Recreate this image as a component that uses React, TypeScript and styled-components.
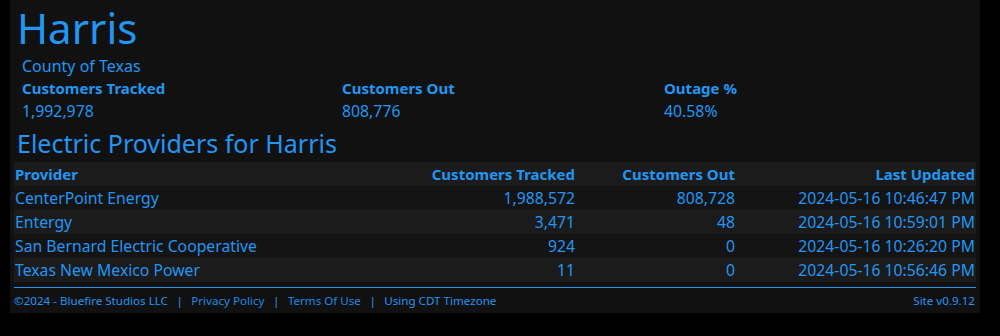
import React from "react";
import styled, { createGlobalStyle } from "styled-components";

const GlobalStyle = createGlobalStyle`
  html, body { margin: 0; padding: 0; background: #000; }
  body { font-family: "Noto Sans", "Open Sans", sans-serif; color: #2196f3; }
`;

const Page = styled.div`
  width: 970px;
  margin-left: 10px;
  background: #111111;
  padding: 0 4px 3px 4px;
  box-sizing: border-box;
`;

const Title = styled.h1`
  margin: 0;
  padding-left: 3px;
  font-size: 42px;
  line-height: 55px;
  font-weight: 400;
  color: #2196f3;
`;

const Subtitle = styled.div`
  padding-left: 8px;
  font-size: 16px;
  line-height: 22px;
  color: #2196f3;
`;

const Stats = styled.div`
  display: grid;
  grid-template-columns: 320px 322px 1fr;
  padding-left: 8px;
`;

const Stat = styled.div`
  display: flex;
  flex-direction: column;
`;

const StatLabel = styled.div`
  font-size: 15px;
  line-height: 22px;
  font-weight: 700;
`;

const StatValue = styled.div`
  font-size: 15.8px;
  line-height: 24px;
`;

const SectionTitle = styled.h2`
  margin: 2px 0 0 0;
  padding-left: 3px;
  font-size: 25px;
  line-height: 37px;
  font-weight: 400;
  color: #2196f3;
`;

const Table = styled.div`
  display: grid;
  grid-template-columns: 1fr 160px 160px 240px;
`;

const Row = styled.div<{ $bg: string }>`
  display: contents;
  & > div { background: ${(p) => p.$bg}; }
`;

const Cell = styled.div<{ $right?: boolean; $head?: boolean }>`
  font-size: ${(p) => (p.$head ? "15px" : "15.75px")};
  line-height: 24px;
  font-weight: ${(p) => (p.$head ? 700 : 400)};
  text-align: ${(p) => (p.$right ? "right" : "left")};
  padding: 0 ${(p) => (p.$right ? "1px" : "0")} 0 ${(p) => (p.$right ? "0" : "1px")};
  white-space: nowrap;
`;

const Footer = styled.div`
  margin-top: 5px;
  border-top: 1px solid #2196f3;
  padding-top: 4px;
  display: flex;
  align-items: center;
  font-size: 11.6px;
  line-height: 18px;
`;

const FooterItem = styled.span<{ $muted?: boolean }>`
  color: ${(p) => (p.$muted ? "#1e88e5" : "#2196f3")};
`;

const Sep = styled.span`
  margin: 0 8.5px;
  color: #2196f3;
`;

const Version = styled.span`
  margin-left: auto;
  padding-right: 1px;
`;

const providers = [
  ["CenterPoint Energy", "1,988,572", "808,728", "2024-05-16 10:46:47 PM"],
  ["Entergy", "3,471", "48", "2024-05-16 10:59:01 PM"],
  ["San Bernard Electric Cooperative", "924", "0", "2024-05-16 10:26:20 PM"],
  ["Texas New Mexico Power", "11", "0", "2024-05-16 10:56:46 PM"],
];

export default function App() {
  return (
    <>
      <GlobalStyle />
      <Page>
        <Title>Harris</Title>
        <Subtitle>County of Texas</Subtitle>
        <Stats>
          <Stat>
            <StatLabel>Customers Tracked</StatLabel>
            <StatValue>1,992,978</StatValue>
          </Stat>
          <Stat>
            <StatLabel>Customers Out</StatLabel>
            <StatValue>808,776</StatValue>
          </Stat>
          <Stat>
            <StatLabel>Outage %</StatLabel>
            <StatValue>40.58%</StatValue>
          </Stat>
        </Stats>
        <SectionTitle>Electric Providers for Harris</SectionTitle>
        <Table>
          <Row $bg="#1b1b1b">
            <Cell $head>Provider</Cell>
            <Cell $head $right>Customers Tracked</Cell>
            <Cell $head $right>Customers Out</Cell>
            <Cell $head $right>Last Updated</Cell>
          </Row>
          {providers.map((p, i) => (
            <Row key={p[0]} $bg={i % 2 === 0 ? "#141414" : "#1b1b1b"}>
              <Cell>{p[0]}</Cell>
              <Cell $right>{p[1]}</Cell>
              <Cell $right>{p[2]}</Cell>
              <Cell $right>{p[3]}</Cell>
            </Row>
          ))}
        </Table>
        <Footer>
          <FooterItem>©2024 - Bluefire Studios LLC</FooterItem>
          <Sep>|</Sep>
          <FooterItem $muted>Privacy Policy</FooterItem>
          <Sep>|</Sep>
          <FooterItem $muted>Terms Of Use</FooterItem>
          <Sep>|</Sep>
          <FooterItem>Using CDT Timezone</FooterItem>
          <Version>Site v0.9.12</Version>
        </Footer>
      </Page>
    </>
  );
}
